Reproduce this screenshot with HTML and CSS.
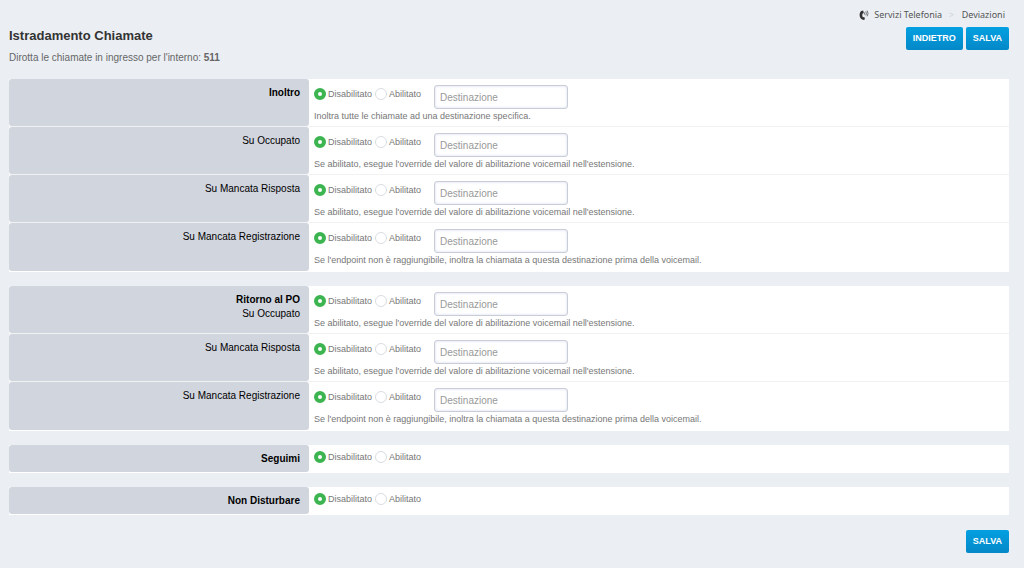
FILE: index.html
```html
<!DOCTYPE html>
<html lang="it">
<head>
<meta charset="utf-8">
<title>Istradamento Chiamate</title>
<link rel="stylesheet" href="styles.css">
</head>
<body>
<form class="page">
  <nav class="crumbs">
    <svg class="phone" viewBox="0 0 10 10" width="10" height="10" aria-hidden="true">
      <path d="M2.200.900 4.200.500 4.800 3 3.500 3.700C3.100 5 3.300 6.200 3.900 7.200L5.300 7.100 6 9.300 4.400 9.900C2.100 9.700.500 7.500.600 4.800.700 3 1.200 1.600 2.200.900Z" fill="#333"/>
      <path d="M5.600 2.400V4.600M6.800 1.500Q8 3.500 6.800 5.400M8.100.6Q10 3.500 8.100 6.300" fill="none" stroke="#555" stroke-width=".8"/>
    </svg>
    <a href="#">Servizi Telefonia</a><span class="sep">&gt;</span><a href="#">Deviazioni</a>
  </nav>
  <header class="head">
    <div>
      <h1 class="title">Istradamento Chiamate</h1>
      <p class="subtitle">Dirotta le chiamate in ingresso per l'interno: <strong>511</strong></p>
    </div>
    <div class="actions"><button class="btn" type="button">INDIETRO</button><button class="btn" type="submit">SALVA</button></div>
  </header>
  <main class="groups">
    <section class="group">
      <div class="row"><div class="name" id="n1"><strong>Inoltro</strong></div><div class="value">
        <div class="controls"><div class="options" role="radiogroup" aria-labelledby="n1"><label><input type="radio" name="r1" checked>Disabilitato</label><label><input type="radio" name="r1">Abilitato</label></div><input class="dest" type="text" placeholder="Destinazione" aria-labelledby="n1"></div>
        <p class="help">Inoltra tutte le chiamate ad una destinazione specifica.</p></div></div>
      <div class="row"><div class="name" id="n2">Su Occupato</div><div class="value">
        <div class="controls"><div class="options" role="radiogroup" aria-labelledby="n2"><label><input type="radio" name="r2" checked>Disabilitato</label><label><input type="radio" name="r2">Abilitato</label></div><input class="dest" type="text" placeholder="Destinazione" aria-labelledby="n2"></div>
        <p class="help">Se abilitato, esegue l'override del valore di abilitazione voicemail nell'estensione.</p></div></div>
      <div class="row"><div class="name" id="n3">Su Mancata Risposta</div><div class="value">
        <div class="controls"><div class="options" role="radiogroup" aria-labelledby="n3"><label><input type="radio" name="r3" checked>Disabilitato</label><label><input type="radio" name="r3">Abilitato</label></div><input class="dest" type="text" placeholder="Destinazione" aria-labelledby="n3"></div>
        <p class="help">Se abilitato, esegue l'override del valore di abilitazione voicemail nell'estensione.</p></div></div>
      <div class="row"><div class="name" id="n4">Su Mancata Registrazione</div><div class="value">
        <div class="controls"><div class="options" role="radiogroup" aria-labelledby="n4"><label><input type="radio" name="r4" checked>Disabilitato</label><label><input type="radio" name="r4">Abilitato</label></div><input class="dest" type="text" placeholder="Destinazione" aria-labelledby="n4"></div>
        <p class="help">Se l'endpoint non è raggiungibile, inoltra la chiamata a questa destinazione prima della voicemail.</p></div></div>
    </section>
    <section class="group">
      <div class="row"><div class="name" id="n5"><strong>Ritorno al PO</strong><br>Su Occupato</div><div class="value">
        <div class="controls"><div class="options" role="radiogroup" aria-labelledby="n5"><label><input type="radio" name="r5" checked>Disabilitato</label><label><input type="radio" name="r5">Abilitato</label></div><input class="dest" type="text" placeholder="Destinazione" aria-labelledby="n5"></div>
        <p class="help">Se abilitato, esegue l'override del valore di abilitazione voicemail nell'estensione.</p></div></div>
      <div class="row"><div class="name" id="n6">Su Mancata Risposta</div><div class="value">
        <div class="controls"><div class="options" role="radiogroup" aria-labelledby="n6"><label><input type="radio" name="r6" checked>Disabilitato</label><label><input type="radio" name="r6">Abilitato</label></div><input class="dest" type="text" placeholder="Destinazione" aria-labelledby="n6"></div>
        <p class="help">Se abilitato, esegue l'override del valore di abilitazione voicemail nell'estensione.</p></div></div>
      <div class="row"><div class="name" id="n7">Su Mancata Registrazione</div><div class="value">
        <div class="controls"><div class="options" role="radiogroup" aria-labelledby="n7"><label><input type="radio" name="r7" checked>Disabilitato</label><label><input type="radio" name="r7">Abilitato</label></div><input class="dest" type="text" placeholder="Destinazione" aria-labelledby="n7"></div>
        <p class="help">Se l'endpoint non è raggiungibile, inoltra la chiamata a questa destinazione prima della voicemail.</p></div></div>
    </section>
    <section class="group">
      <div class="row"><div class="name" id="n8"><strong>Seguimi</strong></div><div class="value">
        <div class="options" role="radiogroup" aria-labelledby="n8"><label><input type="radio" name="r8" checked>Disabilitato</label><label><input type="radio" name="r8">Abilitato</label></div></div></div>
    </section>
    <section class="group">
      <div class="row"><div class="name" id="n9"><strong>Non Disturbare</strong></div><div class="value">
        <div class="options" role="radiogroup" aria-labelledby="n9"><label><input type="radio" name="r9" checked>Disabilitato</label><label><input type="radio" name="r9">Abilitato</label></div></div></div>
    </section>
  </main>
  <footer class="actions foot"><button class="btn" type="submit">SALVA</button></footer>
</form>
</body>
</html>
```
FILE: styles.css
```css
* { box-sizing: border-box; }
body {
  margin: 0;
  background: #ebeff4;
  color: #666;
  font: 10px/14px "Liberation Sans", Arial, sans-serif;
}
.page { padding: 8px 15px 15px 9px; }
.crumbs {
  display: flex;
  justify-content: flex-end;
  align-items: center;
  padding-right: 4px;
  font: 9px/13px "Noto Sans", sans-serif;
}
.phone { margin-right: 5px; }
.crumbs a { color: #555; text-decoration: none; }
.sep { margin: 0 8px 0 7px; color: #ccd0d4; font-size: 8px; }
.head { display: flex; justify-content: space-between; padding-top: 6px; }
.title { margin: 0; padding-top: 1px; font-size: 13px; line-height: 16px; color: #333; }
.subtitle { margin: 7px 0 14px; line-height: 14px; }
.actions { display: flex; align-items: flex-start; gap: 3px; }
.btn {
  height: 23px;
  padding: 0 7px;
  border: 0;
  border-radius: 2px;
  background: linear-gradient(#03a0e1, #0488c8);
  color: #fff;
  font: bold 9px/23px "Liberation Sans", Arial, sans-serif;
}
.groups { display: grid; gap: 14px; }
.group { padding-bottom: 1px; background: #fff; }
.row {
  display: grid;
  grid-template-columns: 3fr 7fr;
  border-bottom: 1px solid #f0f2f4;
}
.row:last-child { border-bottom: 0; }
.row:last-child .value { padding-bottom: 4px; }
.name {
  padding: 7px 9px 6px 0;
  border-radius: 3px;
  background: #d1d5de;
  color: #000;
  text-align: right;
}
.value { padding: 6px 5px 3px; }
.controls { display: flex; gap: 13px; height: 25px; }
.options { display: flex; align-items: flex-start; gap: 3px; font-size: 9px; line-height: 14px; padding-top: 2px; }
.options label { display: flex; align-items: center; gap: 2px; color: #777; }
.options input {
  appearance: none;
  width: 12px;
  height: 12px;
  margin: 0;
  border: 1px solid #d9dde2;
  border-radius: 50%;
  background: #fff;
}
.options input:checked { border: 4px solid #3cb450; }
.value > .options { padding-top: 0; }
.value:has(> .options) { padding-top: 5px; }
.dest {
  width: 134px;
  height: 24px;
  padding: 0 5px;
  border: 1px solid #c9cdd8;
  border-radius: 3px;
  background: #fff;
  box-shadow: inset 0 0 3px #d5daec;
  font: 10px "Liberation Sans", Arial, sans-serif;
}
.dest::placeholder { color: #999; }
.help { margin: 0; font-size: 9px; line-height: 13px; color: #777; }
.foot { justify-content: flex-end; padding-top: 15px; }
```
